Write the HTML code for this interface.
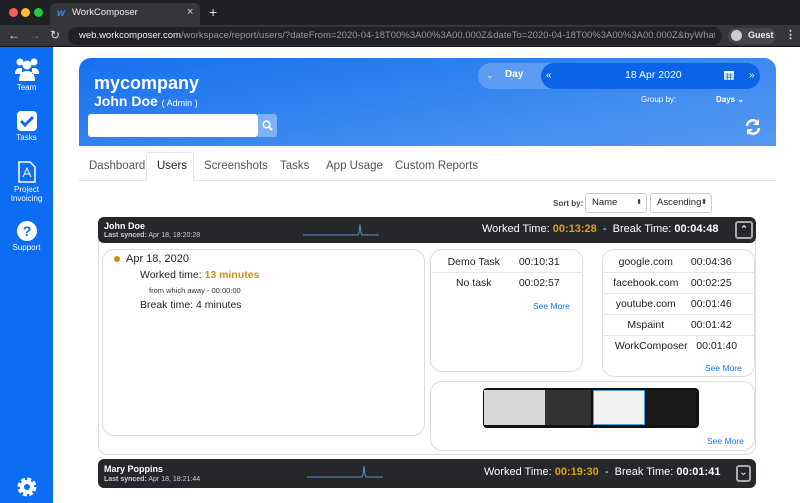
<!DOCTYPE html>
<html><head><meta charset="utf-8"><style>
*{box-sizing:border-box;margin:0;padding:0}
body{width:800px;height:503px;overflow:hidden;background:#fff;font-family:"Liberation Sans",Arial,sans-serif;position:relative}
.abs{position:absolute}
.tabbar{left:0;top:0;width:800px;height:25px;background:#202124}
.addr{left:0;top:25px;width:800px;height:22px;background:#35363a;border-bottom:1px solid #111}
.side{left:0;top:47px;width:53px;height:456px;background:#0c6cf2;color:#fff;font-size:8px;text-align:center}
.side .it{position:absolute;left:0;width:53px}
.hdr{left:79px;top:58px;width:697px;height:88px;border-radius:12px 12px 0 0;background:linear-gradient(170deg,#1570ef 0%,#3d8af0 60%,#5599f0 100%);color:#fff}
.tab{position:absolute;top:152px;height:28px;font-size:11.5px;color:#555;line-height:28px}
.sel{position:absolute;top:193px;height:20px;border:1px solid #ccc;border-radius:3px;font-size:9.5px;line-height:18px;padding-left:6px;color:#222}
.bar{background:#25272b;border-radius:6px;color:#fff}
.card{border:1px solid #ddd;border-radius:12px;background:#fff}
.row{display:flex;justify-content:space-between;font-size:10.5px;color:#222;padding:0 10px;height:21px;line-height:21px;border-bottom:1px solid #e6e6e6}
.row span{flex:1;text-align:center}
.sm{font-size:8.5px;color:#1a73e8;position:absolute}
</style></head><body>
<div class="abs tabbar">
 <div class="abs" style="left:9px;top:8px;width:9px;height:9px;border-radius:50%;background:#fe5f57"></div>
 <div class="abs" style="left:21px;top:8px;width:9px;height:9px;border-radius:50%;background:#febc2e"></div>
 <div class="abs" style="left:34px;top:8px;width:9px;height:9px;border-radius:50%;background:#28c840"></div>
 <div class="abs" style="left:50px;top:3px;width:150px;height:22px;background:#35363a;border-radius:6px 6px 0 0"></div>
 <div class="abs" style="left:57px;top:8px;color:#3b8cf5;font-size:10px;font-weight:bold;font-style:italic">w</div>
 <div class="abs" style="left:72px;top:7px;color:#eee;font-size:9.5px">WorkComposer</div>
 <div class="abs" style="left:187px;top:6px;color:#ddd;font-size:11px">×</div>
 <div class="abs" style="left:209px;top:4px;color:#ddd;font-size:14px">+</div>
</div>
<div class="abs addr">
 <div class="abs" style="left:8px;top:3px;color:#ddd;font-size:12px">←</div>
 <div class="abs" style="left:29px;top:3px;color:#777;font-size:12px">→</div>
 <div class="abs" style="left:50px;top:3px;color:#ddd;font-size:12px">↻</div>
 <div class="abs" style="left:68px;top:2px;width:654px;height:18px;background:#202124;border-radius:9px"></div>
 <div class="abs" style="left:79px;top:5px;font-size:9.5px;color:#999;white-space:nowrap;width:636px;overflow:hidden"><span style="color:#eee">web.workcomposer.com</span>/workspace/report/users/?dateFrom=2020-04-18T00%3A00%3A00.000Z&amp;dateTo=2020-04-18T00%3A00%3A00.000Z&amp;byWhatT...</div>
 <div class="abs" style="left:728px;top:3px;width:48px;height:16px;background:#45464a;border-radius:8px"></div>
 <div class="abs" style="left:731px;top:5px;width:11px;height:11px;border-radius:50%;background:#ccc"></div>
 <div class="abs" style="left:748px;top:5px;font-size:9px;color:#eee;font-weight:bold">Guest</div>
 <div class="abs" style="left:785px;top:3px;font-size:11px;color:#ddd;font-weight:bold">⋮</div>
</div>
<div class="abs side">
 <div class="it" style="top:10px"><svg width="26" height="24" viewBox="0 0 26 24"><circle cx="6" cy="5" r="3.5" fill="#fff"/><circle cx="20" cy="5" r="3.5" fill="#fff"/><circle cx="13" cy="8" r="4.5" fill="#fff"/><path d="M1 17q0-6 5-6h2v6zM25 17q0-6-5-6h-2v6zM5 24q0-10 8-10t8 10z" fill="#fff"/></svg><div>Team</div></div>
 <div class="it" style="top:64px"><svg width="20" height="20"><rect x="0" y="0" width="20" height="20" rx="4" fill="#fff"/><path d="M4 10l4 4 8-8" stroke="#0c6cf2" stroke-width="3" fill="none"/></svg><div>Tasks</div></div>
 <div class="it" style="top:114px"><svg width="18" height="22"><path d="M1 1h11l5 5v15H1z" fill="none" stroke="#fff" stroke-width="1.5"/><path d="M5 16l4-9 4 9M6 13h6" stroke="#fff" fill="none"/></svg><div>Project<br>Invoicing</div></div>
 <div class="it" style="top:174px"><svg width="20" height="20"><circle cx="10" cy="10" r="10" fill="#fff"/><text x="10" y="15" text-anchor="middle" font-size="14" font-weight="bold" fill="#0c6cf2" font-family="Liberation Sans">?</text></svg><div>Support</div></div>
 <div class="it" style="top:428px"><svg width="24" height="24" viewBox="0 0 24 24"><circle cx="12" cy="12" r="7" fill="none" stroke="#fff" stroke-width="5" stroke-dasharray="3.5 2"/><circle cx="12" cy="12" r="7" fill="#fff"/><circle cx="12" cy="12" r="3" fill="#0c6cf2"/></svg></div>
</div>
<div class="abs hdr">
 <div class="abs" style="left:15px;top:15px;font-size:18px;font-weight:bold">mycompany</div>
 <div class="abs" style="left:15px;top:35px;font-size:14px;font-weight:bold">John Doe <span style="font-size:9px;font-weight:normal">( Admin )</span></div>
 <div class="abs" style="left:9px;top:56px;width:170px;height:23px;background:#fff;border-radius:3px"></div>
 <div class="abs" style="left:179px;top:56px;width:19px;height:23px;background:#7fb2f5;border-radius:0 3px 3px 0"><svg width="19" height="23"><circle cx="8.5" cy="10.5" r="3.3" stroke="#fff" stroke-width="1.6" fill="none"/><path d="M11 13l3 3" stroke="#fff" stroke-width="2"/></svg></div>
 <div class="abs" style="left:399px;top:5px;width:282px;height:26px;background:#5c9cf2;border-radius:13px"></div>
 <div class="abs" style="left:407px;top:12px;font-size:9px">⌄</div>
 <div class="abs" style="left:426px;top:11px;font-size:10px;font-weight:bold">Day</div>
 <div class="abs" style="left:462px;top:5px;width:219px;height:26px;background:#0b63e8;border-radius:13px"></div>
 <div class="abs" style="left:467px;top:12px;font-size:10px">«</div>
 <div class="abs" style="left:546px;top:11px;font-size:10.5px">18 Apr 2020</div>
 <svg class="abs" style="left:645px;top:12px" width="10" height="10"><rect x="0" y="1" width="10" height="9" rx="1" fill="#cfe0fb"/><rect x="0" y="1" width="10" height="2" fill="#fff"/><path d="M2 5h6M2 7.5h6M3.5 3v7M6.5 3v7" stroke="#0b63e8" stroke-width=".6"/></svg>
 <div class="abs" style="left:670px;top:12px;font-size:10px">»</div>
 <div class="abs" style="left:562px;top:37px;font-size:8px">Group by:</div>
 <div class="abs" style="left:637px;top:37px;font-size:8px;font-weight:bold">Days ⌄</div>
 <svg class="abs" style="left:665px;top:60px" width="18" height="18" viewBox="0 0 18 18"><path d="M3 8a6 6 0 0 1 11-3" stroke="#fff" stroke-width="2.6" fill="none"/><path d="M15 1v6h-6z" fill="#fff"/><path d="M15 10a6 6 0 0 1-11 3" stroke="#fff" stroke-width="2.6" fill="none"/><path d="M3 17v-6h6z" fill="#fff"/></svg>
</div>
<div class="abs" style="left:79px;top:180px;width:697px;height:1px;background:#e3e3e3"></div>
<div class="abs" style="left:146px;top:152px;width:48px;height:29px;border:1px solid #e3e3e3;border-bottom:1px solid #fff;border-radius:3px 3px 0 0;background:#fff"></div>
<div class="tab" style="left:89px">Dashboard</div>
<div class="tab" style="left:157px;color:#222">Users</div>
<div class="tab" style="left:204px">Screenshots</div>
<div class="tab" style="left:280px">Tasks</div>
<div class="tab" style="left:326px">App Usage</div>
<div class="tab" style="left:395px">Custom Reports</div>
<div class="abs" style="left:553px;top:199px;font-size:8px;font-weight:bold;color:#444">Sort by:</div>
<div class="sel" style="left:585px;width:62px">Name<span style="position:absolute;right:4px;font-size:7px">⬍</span></div>
<div class="sel" style="left:650px;width:62px">Ascending<span style="position:absolute;right:4px;font-size:7px">⬍</span></div>
<div class="abs" style="left:98px;top:240px;width:658px;height:215px;border:1px solid #ddd;border-radius:0 0 10px 10px"></div>
<div class="abs bar" style="left:98px;top:217px;width:658px;height:26px">
 <div class="abs" style="left:6px;top:4px;font-size:9px;font-weight:bold">John Doe</div>
 <div class="abs" style="left:6px;top:15px;font-size:7px;color:#ccd"><b>Last synced:</b> Apr 18, 18:20:28</div>
 <svg class="abs" style="left:205px;top:6px" width="76" height="14"><path d="M0 12h55l1-2 1-9 1 9 1 2h17" stroke="#5b8fd0" fill="none"/></svg>
 <div class="abs" style="left:384px;top:6px;font-size:11px">Worked Time: <b style="color:#d9a21b">00:13:28</b> &nbsp;- &nbsp;Break Time: <b>00:04:48</b></div>
 <div class="abs" style="left:637px;top:4px;width:18px;height:18px;border:2px solid #aaa;border-radius:3px;font-size:9px;text-align:center;line-height:13px;font-weight:bold">⌃</div>
</div>
<div class="abs card" style="left:102px;top:249px;width:323px;height:187px">
 <div class="abs" style="left:11px;top:6px;width:6px;height:6px;border-radius:50%;background:#c8920e"></div>
 <div class="abs" style="left:23px;top:3px;font-size:11px;color:#222">Apr 18, 2020</div>
 <div class="abs" style="left:37px;top:19px;font-size:10.5px;color:#222">Worked time: <b style="color:#c8980e">13 minutes</b></div>
 <div class="abs" style="left:46px;top:36px;font-size:7.5px;color:#333">from which away - 00:00:00</div>
 <div class="abs" style="left:37px;top:49px;font-size:10.5px;color:#222">Break time: 4 minutes</div>
</div>
<div class="abs card" style="left:430px;top:249px;width:153px;height:123px;padding-top:2px">
 <div class="row"><span>Demo Task</span><span>00:10:31</span></div>
 <div class="row" style="border:none"><span>No task</span><span>00:02:57</span></div>
 <div class="sm" style="left:102px;top:51px">See More</div>
</div>
<div class="abs card" style="left:602px;top:249px;width:153px;height:128px;padding-top:2px">
 <div class="row"><span>google.com</span><span>00:04:36</span></div>
 <div class="row"><span>facebook.com</span><span>00:02:25</span></div>
 <div class="row"><span>youtube.com</span><span>00:01:46</span></div>
 <div class="row"><span>Mspaint</span><span>00:01:42</span></div>
 <div class="row" style="border:none"><span style="flex:1.4">WorkComposer</span><span>00:01:40</span></div>
 <div class="sm" style="left:102px;top:113px">See More</div>
</div>
<div class="abs card" style="left:430px;top:381px;width:325px;height:70px">
 <div class="sm" style="left:276px;top:54px">See More</div>
</div>
<div class="abs" style="left:483px;top:388px;width:216px;height:40px;background:#111;border-radius:4px;overflow:hidden">
 <div class="abs" style="left:1px;top:2px;width:61px;height:35px;background:#d8d8d8"></div>
 <div class="abs" style="left:62px;top:2px;width:46px;height:35px;background:#333"></div>
 <div class="abs" style="left:110px;top:2px;width:52px;height:35px;background:#f2f2f2;border:1px solid #4a9fe0"></div>
 <div class="abs" style="left:163px;top:2px;width:50px;height:35px;background:#1a1a1a"></div>
</div>
<div class="abs bar" style="left:98px;top:459px;width:658px;height:29px">
 <div class="abs" style="left:6px;top:5px;font-size:9px;font-weight:bold">Mary Poppins</div>
 <div class="abs" style="left:6px;top:17px;font-size:7px;color:#ccd"><b>Last synced:</b> Apr 18, 18:21:44</div>
 <svg class="abs" style="left:209px;top:6px" width="76" height="14"><path d="M0 12h55l1-2 1-9 1 9 1 2h17" stroke="#5b8fd0" fill="none"/></svg>
 <div class="abs" style="left:386px;top:7px;font-size:11px">Worked Time: <b style="color:#d9a21b">00:19:30</b> &nbsp;- &nbsp;Break Time: <b>00:01:41</b></div>
 <div class="abs" style="left:638px;top:6px;width:15px;height:17px;border:2px solid #aaa;border-radius:3px;font-size:10px;text-align:center;line-height:12px">⌄</div>
</div>
</body></html>
